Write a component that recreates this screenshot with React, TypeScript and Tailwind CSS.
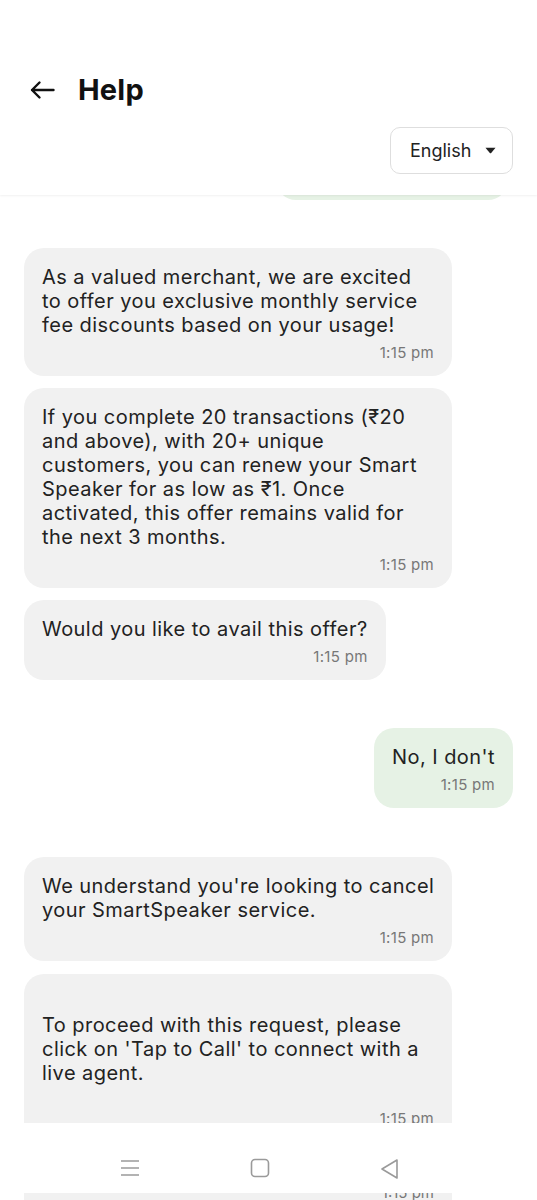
import React from "react";

type Msg = { id: number; from: "bot" | "me"; text: string; time: string; tall?: boolean };

// line breaks follow the chat widget's wrapping
const messages: Msg[] = [
  {
    id: 1,
    from: "bot",
    text: "As a valued merchant, we are excited\nto offer you exclusive monthly service\nfee discounts based on your usage!",
    time: "1:15 pm",
  },
  {
    id: 2,
    from: "bot",
    text: "If you complete 20 transactions (₹20\nand above), with 20+ unique\ncustomers, you can renew your Smart\nSpeaker for as low as ₹1. Once\nactivated, this offer remains valid for\nthe next 3 months.",
    time: "1:15 pm",
  },
  { id: 3, from: "bot", text: "Would you like to avail this offer?", time: "1:15 pm" },
  { id: 4, from: "me", text: "No, I don't", time: "1:15 pm" },
  {
    id: 5,
    from: "bot",
    text: "We understand you're looking to cancel\nyour SmartSpeaker service.",
    time: "1:15 pm",
  },
  {
    id: 6,
    from: "bot",
    text: "\nTo proceed with this request, please\nclick on 'Tap to Call' to connect with a\nlive agent.",
    time: "1:15 pm",
    tall: true,
  },
];

function Bubble({ m }: { m: Msg }) {
  const mine = m.from === "me";
  const wraps = m.text.includes("\n");
  return (
    <div
      className={`shrink-0 rounded-[20px] px-[18px] pb-[13px] ${m.tall ? "pt-[15px]" : "pt-[17px]"} ${
        wraps ? "w-[428px]" : "max-w-[428px]"
      } ${mine ? "self-end bg-[#e6f2e5]" : "self-start bg-[#f1f1f1]"}`}
    >
      <p className="whitespace-pre text-[20px] leading-[24px] tracking-[0.45px] text-[#222]">{m.text}</p>
      <p
        className={`text-right text-[15px] leading-[20px] tracking-[0.3px] text-[#777] ${
          m.tall ? "mt-[24px]" : "mt-[6px]"
        }`}
      >
        {m.time}
      </p>
    </div>
  );
}

export default function App() {
  return (
    <div
      className="flex h-[1200px] w-[537px] flex-col overflow-hidden bg-white"
      style={{ fontFamily: "Inter, 'Noto Sans', sans-serif" }}
    >
      <header className="relative z-10 flex h-[195px] shrink-0 flex-col bg-white shadow-[0_1px_2px_rgba(0,0,0,0.06)]">
        <div className="mt-[72px] flex h-[36px] items-center pl-[30px]">
          <svg width="25" height="20" viewBox="0 0 25 20" fill="none" stroke="#111" strokeWidth="2.4" strokeLinecap="round" strokeLinejoin="round">
            <path d="M23.5 10H2M9.5 2.5L2 10l7.5 7.5" />
          </svg>
          <h1 className="ml-[23px] text-[29px] font-bold leading-[36px] tracking-[0.2px] text-[#111]">Help</h1>
        </div>
        <div className="mt-[19px] flex justify-end pr-[24px]">
          <button className="flex h-[47px] w-[123px] items-center gap-[14px] rounded-[10px] border border-[#dedede] pl-[19px] text-[18px] text-[#222]">
            English
            <svg width="11" height="7" viewBox="0 0 11 7">
              <path d="M0.5 0.8h10L6.2 6a1 1 0 0 1-1.4 0z" fill="#222" />
            </svg>
          </button>
        </div>
      </header>

      <main className="flex flex-1 flex-col overflow-hidden px-[24px]">
        <div className="-mt-[55px] ml-auto mr-[5px] h-[60px] w-[232px] shrink-0 rounded-[20px] bg-[#e6f2e5]" />
        <div className="mt-[48px] flex flex-col gap-[12px]">
          {messages.slice(0, 3).map((m) => (
            <Bubble key={m.id} m={m} />
          ))}
        </div>
        <div className="mt-[48px] flex flex-col">
          <Bubble m={messages[3]} />
        </div>
        <div className="mt-[49px] flex flex-col gap-[13px]">
          {messages.slice(4).map((m) => (
            <Bubble key={m.id} m={m} />
          ))}
        </div>
      </main>

      <nav className="flex h-[70px] shrink-0 items-start justify-center gap-[110px] bg-white pt-[35px] pr-[17px]">
        <svg width="20" height="20" viewBox="0 0 20 20" stroke="#9a9a9a" strokeWidth="1.6">
          <path d="M1 3h18M1 10h18M1 17h18" />
        </svg>
        <svg width="20" height="20" viewBox="0 0 20 20" fill="none" stroke="#9a9a9a" strokeWidth="1.6">
          <rect x="1.5" y="1.5" width="17" height="17" rx="3.5" />
        </svg>
        <svg width="20" height="22" viewBox="0 0 20 22" fill="none" stroke="#9a9a9a" strokeWidth="1.6" strokeLinejoin="round">
          <path d="M17 2L2 11l15 9z" />
        </svg>
      </nav>
      <div className="mx-[24px] h-[7px] w-[428px] shrink-0 overflow-hidden bg-[#f1f1f1]">
        <p className="-mt-[10px] pr-[18px] text-right text-[15px] leading-[20px] text-[#777]">1:15 pm</p>
      </div>
    </div>
  );
}
